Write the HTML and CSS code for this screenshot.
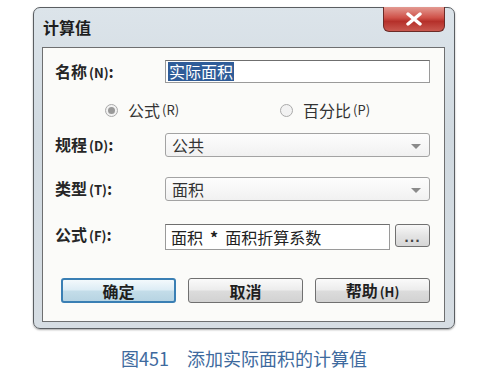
FILE: index.html
```html
<!DOCTYPE html>
<html lang="zh-CN">
<head>
  <meta charset="UTF-8" />
  <title>计算值</title>
  <link rel="stylesheet" href="styles.css">
</head>
<body>
  <div class="page">
    <div class="dialog">
      <div class="titlebar">
        <span class="title">计算值</span>
        <span class="close">
          <svg width="18" height="14" viewBox="0 0 18 14">
            <path d="M3 2 L15 12 M15 2 L3 12" stroke="#fff" stroke-width="3.4" stroke-linecap="round"/>
          </svg>
        </span>
      </div>

      <div class="client">
        <div class="row row-name">
          <label class="lbl">名称<span class="key">(N)</span>:</label>
          <div class="field textbox"><span class="sel">实际面积</span></div>
        </div>

        <div class="radios">
          <div class="radio checked"><span class="dot"></span>公式<span class="key light">(R)</span></div>
          <div class="radio"><span class="dot"></span>百分比<span class="key light">(P)</span></div>
        </div>

        <div class="row row-disc">
          <label class="lbl">规程<span class="key">(D)</span>:</label>
          <div class="field combo">公共<span class="arrow"></span></div>
        </div>

        <div class="row row-type">
          <label class="lbl">类型<span class="key">(T)</span>:</label>
          <div class="field combo">面积<span class="arrow"></span></div>
        </div>

        <div class="row row-formula">
          <label class="lbl">公式<span class="key">(F)</span>:</label>
          <div class="field textbox formula">面积<span class="op">*</span>面积折算系数</div>
          <button class="dots">...</button>
        </div>

        <div class="buttons">
          <button class="btn default">确定</button>
          <button class="btn">取消</button>
          <button class="btn">帮助<span class="key">(H)</span></button>
        </div>
      </div>
    </div>

    <p class="caption">图451　添加实际面积的计算值</p>
  </div>
</body>
</html>
```

FILE: styles.css
```css
* {
  box-sizing: border-box;
}

body {
  margin: 0;
  background: #fff;
  font-family: "Noto Sans CJK SC", "Noto Sans", sans-serif;
  color: #222;
}

.page {
  width: 484px;
  height: 378px;
  padding: 7px 0 0 33px;
}

.dialog {
  width: 422px;
  height: 322px;
  border: 1px solid #5a5e62;
  border-radius: 7px;
  background: linear-gradient(#dce4ea, #d0d9e0 40%, #d6dde3);
  padding: 0 9px 7px 8px;
  box-shadow: 0 1px 2px rgba(0, 0, 0, 0.35);
}

.titlebar {
  height: 39px;
  display: flex;
  justify-content: space-between;
  align-items: flex-start;
}

.title {
  margin: 10px 0 0 1px;
  font-size: 16px;
  font-weight: 700;
  line-height: 18px;
  color: #1e1e1e;
}

.close {
  width: 62px;
  height: 25px;
  margin-top: -1px;
  border: 1px solid #6b2b27;
  border-top: none;
  border-radius: 0 0 6px 6px;
  background: linear-gradient(#e39a92, #cf5148 45%, #b5302a 60%, #c9584f);
  display: flex;
  align-items: center;
  justify-content: center;
}

.client {
  height: 275px;
  border: 1px solid #6e6f70;
  background: #fbfbf9;
  padding: 12px 13px 0 12px;
  display: flex;
  flex-direction: column;
}

.row {
  display: flex;
  align-items: center;
}

.lbl {
  width: 110px;
  flex: none;
  font-size: 16px;
  font-weight: 700;
  color: #262626;
  line-height: 20px;
}

.key {
  font-size: 13px;
  font-weight: 700;
  margin-left: 2px;
}

.key.light {
  font-weight: 400;
}

.field {
  height: 24px;
  font-size: 16px;
  line-height: 20px;
  color: #333;
  display: flex;
  align-items: center;
  position: relative;
}

.textbox {
  width: 265px;
  border: 1px solid #9a9a9a;
  border-top-color: #6f6f6f;
  background: #fff;
  padding-left: 2px;
}

.row-name .textbox {
  height: 23px;
}

.sel {
  background: #2f5c98;
  color: #fff;
  padding: 0 1px;
  line-height: 19px;
}

.combo {
  width: 265px;
  border: 1px solid #a3a3a3;
  border-radius: 3px;
  background: linear-gradient(#fdfdfd, #f1f1f1);
  padding-left: 6px;
}

.arrow {
  position: absolute;
  right: 8px;
  top: 10px;
  border-left: 5px solid transparent;
  border-right: 5px solid transparent;
  border-top: 5px solid #8a8a8a;
}

.radios {
  display: flex;
  margin: 18px 0 0 50px;
  height: 18px;
  align-items: center;
}

.radio {
  display: flex;
  align-items: center;
  font-size: 16px;
  color: #333;
  line-height: 18px;
}

.radio:first-child {
  width: 175px;
}

.dot {
  width: 13px;
  height: 13px;
  border: 1px solid #aaa;
  border-radius: 50%;
  background: #f2f2f2;
  margin-right: 10px;
  position: relative;
}

.radio.checked .dot::after {
  content: "";
  position: absolute;
  left: 2px;
  top: 2px;
  width: 7px;
  height: 7px;
  border-radius: 50%;
  background: #999;
}

.row-disc {
  margin-top: 14px;
}

.row-type {
  margin-top: 20px;
}

.row-formula {
  margin-top: 23px;
  align-items: flex-start;
}

.formula {
  width: 225px;
  height: 26px;
  padding-left: 5px;
  font-size: 16px;
  color: #222;
}

.op {
  margin: 0 7px;
  font-weight: 700;
}

.dots {
  width: 35px;
  height: 23px;
  margin-left: 5px;
  border: 1px solid #707070;
  border-radius: 3px;
  background: linear-gradient(#f8f8f8, #e4e4e4 50%, #d6d6d6);
  font-size: 12px;
  font-weight: 700;
  color: #444;
  padding: 4px 0 0;
  letter-spacing: 1px;
  font-family: "DejaVu Sans", sans-serif;
}

.buttons {
  display: flex;
  gap: 12px;
  margin: 28px 0 0 6px;
}

.btn {
  width: 115px;
  height: 25px;
  border: 1px solid #707070;
  border-radius: 3px;
  background: linear-gradient(#fafafa, #ececec 48%, #dcdcdc 52%, #d2d2d2);
  font-family: "Noto Sans CJK SC", sans-serif;
  font-size: 16px;
  font-weight: 700;
  color: #1f1f1f;
  line-height: 20px;
  padding: 0;
}

.btn.default {
  border: 2px solid #3a7fb4;
  background: linear-gradient(#f3f9fc, #dcecf5 48%, #c4dde9 52%, #b7d4e3);
}

.caption {
  margin: 18px 0 0;
  width: 422px;
  text-align: center;
  font-size: 18px;
  line-height: 22px;
  color: #3e6a9e;
}
```
